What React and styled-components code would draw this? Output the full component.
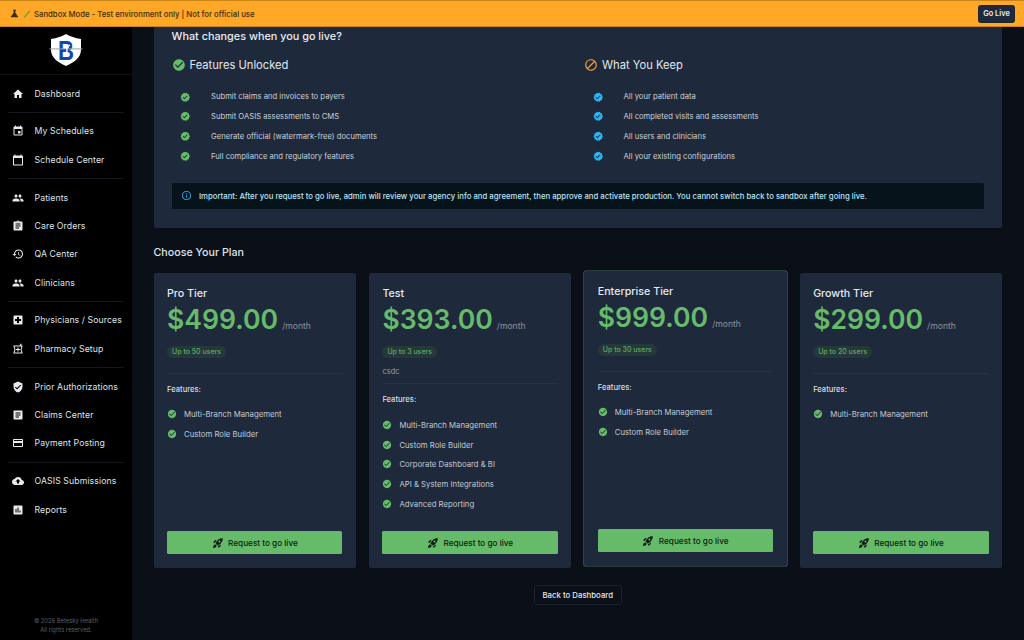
import React from "react";
import styled, { createGlobalStyle } from "styled-components";
import {
  MdHome, MdEvent, MdCalendarToday, MdPeople, MdAssignment, MdHistory, MdLocalHospital,
  MdVerifiedUser, MdCreditCard, MdCloudUpload, MdAssessment, MdCheckCircle, MdVerified,
  MdBlock, MdInfoOutline, MdRocketLaunch, MdScience, MdArticle, MdOutlineLocalPharmacy,
} from "react-icons/md";

const Global = createGlobalStyle`
  html, body { margin: 0; padding: 0; height: 100%; background: #0a0f18; overflow: hidden; }
  #root { height: 640px; }
  * { box-sizing: border-box; }
  body { font-family: Inter, "Liberation Sans", sans-serif; -webkit-font-smoothing: antialiased; }
`;

const Page = styled.div`
  width: 1024px; height: 640px; display: flex; flex-direction: column; overflow: hidden;
`;
const Banner = styled.header`
  height: 27px; flex: none; display: flex; align-items: center; gap: 3px;
  padding: 0 9px 0 9px; background: #ffa726;
  border-top: 1px solid #c98516; border-bottom: 1px solid #c98516;
  color: #3b2c10; font-size: 7.75px; font-weight: 500;
`;
const BannerText = styled.span` flex: 1; `;
const GoLive = styled.button`
  height: 18px; width: 37px; padding: 0; border: 1px solid #20242b; border-radius: 2.5px;
  background: #1e293b; color: #e8edf3; font: 600 7.4px Inter, sans-serif;
`;
const Body = styled.div` flex: 1; display: flex; min-height: 0; `;
const Sidebar = styled.aside`
  width: 132px; flex: none; background: #000; display: flex; flex-direction: column;
`;
const LogoArea = styled.div`
  height: 48px; flex: none; display: flex; justify-content: center; align-items: center;
  padding-bottom: 2px; border-bottom: 1px solid #0e1116;
`;
const Nav = styled.nav` display: flex; flex-direction: column; padding-top: 4.4px; `;
const NavItem = styled.div`
  height: 28.4px; display: flex; align-items: center; padding-left: 12px; gap: 10.5px;
  color: #dfe4ea; font-size: 8.7px; font-weight: 400; letter-spacing: .1px;
  svg { width: 12px; height: 12px; flex: none; color: #e6ebf0; }
`;
const NavDivider = styled.div` height: 1px; margin: 4.2px 8px; background: #14181e; `;
const SideFooter = styled.footer`
  margin-top: auto; padding-bottom: 6px; text-align: center; color: #5b6066;
  font-size: 5.8px; line-height: 9px;
`;
const Main = styled.main`
  flex: 1; min-width: 0; padding: 0 22px 0 21.5px; display: flex; flex-direction: column;
`;
const InfoCard = styled.section`
  height: 201px; flex: none; background: #1e293b; border-radius: 0 0 2.5px 2.5px;
  padding: 0.5px 18px 0 18px;
`;
const InfoTitle = styled.h2`
  margin: 0; font-size: 10.85px; line-height: 14px; padding-top: 1px; font-weight: 500; color: #e8ecf1;
`;
const Columns = styled.div` display: grid; grid-template-columns: 412.5px 1fr; margin-top: 14.5px; `;
const ColHead = styled.h3`
  margin: 0; display: flex; align-items: center; gap: 4px; height: 16px;
  font-size: 11.2px; font-weight: 400; color: #e2e7ed;
  svg { width: 14px; height: 14px; color: ${p => p.$tone}; }
`;
const BenefitList = styled.ul`
  list-style: none; margin: 14px 0 0; padding: 0 0 0 8.5px; display: flex; flex-direction: column;
`;
const Benefit = styled.li`
  height: 19.8px; display: flex; align-items: center; gap: 20.5px;
  font-size: 7.67px; color: #c9d0d9;
  svg { width: 10.5px; height: 10.5px; flex: none; color: ${p => p.$tone}; }
`;
const Notice = styled.div`
  margin-top: 16.5px; height: 26px; display: flex; align-items: center; gap: 7.5px; padding: 0 9px;
  background: #07131b; border-radius: 1.5px; color: #b8e4f5; font-size: 7.76px; font-weight: 500;
  svg { width: 11px; height: 11px; flex: none; color: #29a5e6; }
`;
const SectionTitle = styled.h2`
  margin: 18px 0 0; height: 14px; line-height: 14px; font-size: 10.7px; font-weight: 500; color: #dfe4ea;
`;
const Plans = styled.div`
  margin-top: 13px; display: grid; grid-template-columns: repeat(4, 1fr); gap: 13px;
`;
const PlanCard = styled.article`
  height: 295px; display: flex; flex-direction: column; padding: 13.5px 13.5px;
  background: #1e293b; border-radius: 2px;
  ${p => p.$raised && `transform: translateY(-2px); box-shadow: 0 0 0 .6px #47705a;`}
`;
const PlanName = styled.h3`
  margin: 0; font-size: 10.7px; line-height: 13px; font-weight: 500; color: #e4e9ef;
`;
const PriceRow = styled.div`
  display: flex; align-items: baseline; gap: 4px; height: 32px; margin-top: 3px;
`;
const Price = styled.span` font-size: 26.6px; line-height: 32px; font-weight: 600; color: #66bb6a; `;
const Per = styled.span` font-size: 8.6px; color: #8a94a1; `;
const UsersBadge = styled.span`
  align-self: flex-start; margin-top: 11.5px; height: 12px; line-height: 12px; padding: 0 5px;
  border-radius: 6px; background: #26393a; color: #5fa865; font-size: 7px; font-weight: 500;
`;
const Note = styled.p`
  margin: 9px 0 -7.5px; height: 9px; line-height: 9px; font-size: 7.6px; color: #8f99a5;
`;
const PlanDivider = styled.div` height: 1px; margin-top: 14.5px; background: #263243; flex: none; `;
const FeatHead = styled.div`
  margin-top: 11px; height: 9px; line-height: 9px; font-size: 7.6px; font-weight: 500; color: #d8dee5;
`;
const FeatList = styled.ul`
  list-style: none; margin: 11px 0 0; padding: 0; display: flex; flex-direction: column;
`;
const Feat = styled.li`
  height: 19.8px; display: flex; align-items: center; gap: 7px; font-size: 7.75px; color: #c2cad4;
  svg { width: 10px; height: 10px; flex: none; color: #66bb6a; }
`;
const RequestBtn = styled.button`
  margin-top: auto; margin-bottom: 0.5px; height: 23px; width: 100%; display: flex; align-items: center; justify-content: center; gap: 4.5px;
  background: #66bb6a; border: 0; border-radius: 1.5px; color: #0e1b10;
  font: 500 8.2px Inter, sans-serif;
  svg { width: 12px; height: 12px; }
`;
const BackRow = styled.div` margin-top: 17px; display: flex; justify-content: center; `;
const BackBtn = styled.button`
  height: 20px; width: 88px; padding: 0; background: #0a0f18; border: 1px solid #1b222c; border-radius: 2.5px;
  color: #e4e9ef; font: 500 7.8px Inter, sans-serif;
`;
const TubeMark = styled.svg` width: 8px; height: 8px; flex: none; `;

const Logo = () => (
  <svg width="34" height="34" viewBox="0 0 34 34" role="img" aria-label="logo">
    <path d="M17 1 C21 3.5 26 5 32 6 L32 17 C32 25 24 30 17 33 C10 30 2 25 2 17 L2 6 C8 5 13 3.5 17 1Z" fill="#fff" />
    <text x="17" y="27" textAnchor="middle" textLength="16" lengthAdjust="spacingAndGlyphs" fontFamily="Liberation Sans, sans-serif" fontWeight="700" fontSize="27" fill="#1046ad">B</text>
    <rect x="0.5" y="15.4" width="33" height="1" fill="#9aa3ad" />
    <path d="M14 22 C16 20 19 19 18 17 C17 15 19 13 21 12" fill="none" stroke="#fff" strokeWidth="1.3" />
  </svg>
);

const navGroups = [
  [["Dashboard", MdHome]],
  [["My Schedules", MdEvent], ["Schedule Center", MdCalendarToday]],
  [["Patients", MdPeople], ["Care Orders", MdAssignment], ["QA Center", MdHistory], ["Clinicians", MdPeople]],
  [["Physicians / Sources", MdLocalHospital], ["Pharmacy Setup", MdOutlineLocalPharmacy]],
  [["Prior Authorizations", MdVerifiedUser], ["Claims Center", MdArticle], ["Payment Posting", MdCreditCard]],
  [["OASIS Submissions", MdCloudUpload], ["Reports", MdAssessment]],
];
const unlocked = [
  "Submit claims and invoices to payers",
  "Submit OASIS assessments to CMS",
  "Generate official (watermark-free) documents",
  "Full compliance and regulatory features",
];
const keeps = [
  "All your patient data",
  "All completed visits and assessments",
  "All users and clinicians",
  "All your existing configurations",
];
const plans = [
  { name: "Pro Tier", price: "$499.00", users: "Up to 50 users", feats: ["Multi-Branch Management", "Custom Role Builder"] },
  { name: "Test", price: "$393.00", users: "Up to 3 users", note: "csdc", feats: ["Multi-Branch Management", "Custom Role Builder", "Corporate Dashboard & BI", "API & System Integrations", "Advanced Reporting"] },
  { name: "Enterprise Tier", price: "$999.00", users: "Up to 30 users", raised: true, feats: ["Multi-Branch Management", "Custom Role Builder"] },
  { name: "Growth Tier", price: "$299.00", users: "Up to 20 users", feats: ["Multi-Branch Management"] },
];

export default function App() {
  return (
    <Page>
      <Global />
      <Banner>
        <MdScience size={11} />
        <TubeMark viewBox="0 0 8 8"><path d="M1 7.4 L7 1" stroke="#6f9f3a" strokeWidth="1.3" /></TubeMark>
        <BannerText>Sandbox Mode - Test environment only | Not for official use</BannerText>
        <GoLive>Go Live</GoLive>
      </Banner>
      <Body>
        <Sidebar>
          <LogoArea><Logo /></LogoArea>
          <Nav>
            {navGroups.map((group, i) => (
              <React.Fragment key={i}>
                {i > 0 && <NavDivider />}
                {group.map(([label, Icon]) => (
                  <NavItem key={label}><Icon />{label}</NavItem>
                ))}
              </React.Fragment>
            ))}
          </Nav>
          <SideFooter>© 2026 Betesky Health<br />All rights reserved.</SideFooter>
        </Sidebar>
        <Main>
          <InfoCard>
            <InfoTitle>What changes when you go live?</InfoTitle>
            <Columns>
              <div>
                <ColHead $tone="#66bb6a"><MdCheckCircle />Features Unlocked</ColHead>
                <BenefitList>
                  {unlocked.map(t => <Benefit key={t} $tone="#66bb6a"><MdVerified />{t}</Benefit>)}
                </BenefitList>
              </div>
              <div>
                <ColHead $tone="#f5a030"><MdBlock />What You Keep</ColHead>
                <BenefitList>
                  {keeps.map(t => <Benefit key={t} $tone="#29b6f6"><MdVerified />{t}</Benefit>)}
                </BenefitList>
              </div>
            </Columns>
            <Notice>
              <MdInfoOutline />
              Important: After you request to go live, admin will review your agency info and agreement, then approve and activate production. You cannot switch back to sandbox after going live.
            </Notice>
          </InfoCard>
          <SectionTitle>Choose Your Plan</SectionTitle>
          <Plans>
            {plans.map(p => (
              <PlanCard key={p.name} $raised={p.raised}>
                <PlanName>{p.name}</PlanName>
                <PriceRow><Price>{p.price}</Price><Per>/month</Per></PriceRow>
                <UsersBadge>{p.users}</UsersBadge>
                {p.note && <Note>{p.note}</Note>}
                <PlanDivider />
                <FeatHead>Features:</FeatHead>
                <FeatList>
                  {p.feats.map(f => <Feat key={f}><MdCheckCircle />{f}</Feat>)}
                </FeatList>
                <RequestBtn><MdRocketLaunch />Request to go live</RequestBtn>
              </PlanCard>
            ))}
          </Plans>
          <BackRow><BackBtn>Back to Dashboard</BackBtn></BackRow>
        </Main>
      </Body>
    </Page>
  );
}
